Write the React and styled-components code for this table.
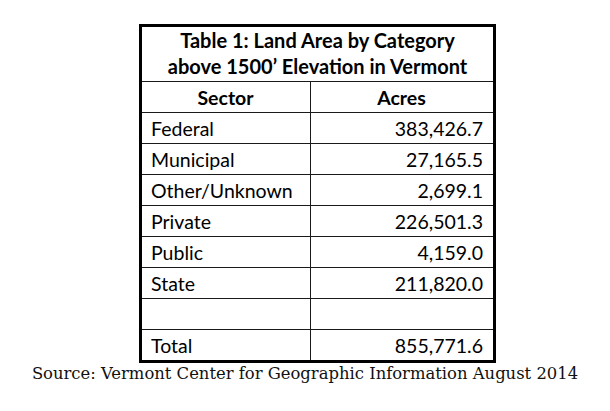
import React from 'react';
import styled, { createGlobalStyle } from 'styled-components';

const GlobalStyle = createGlobalStyle`
  html, body {
    margin: 0;
    padding: 0;
    background: #fff;
  }
`;

const Page = styled.div`
  width: 610px;
  height: 411px;
  display: flex;
  flex-direction: column;
  align-items: center;
  padding-top: 24px;
  box-sizing: border-box;
  font-family: Lato, "Open Sans", sans-serif;
  color: #000;
`;

const Table = styled.div`
  width: 357px;
  margin-left: 25px;
  border: 3px solid #000;
  box-sizing: border-box;
`;

const Title = styled.div`
  height: 54px;
  display: flex;
  flex-direction: column;
  justify-content: center;
  align-items: center;
  font-weight: 700;
  font-size: 20px;
  line-height: 26px;
  padding-bottom: 2px;
  box-sizing: border-box;
`;

const Row = styled.div`
  display: grid;
  grid-template-columns: 168px 1fr;
  height: 31px;
  border-top: 1px solid #1a1a1a;
  box-sizing: border-box;
  font-size: 19.5px;
  font-weight: ${p => (p.$head ? 700 : 400)};
`;

const Cell = styled.div`
  display: flex;
  align-items: center;
  justify-content: ${p => (p.$head ? 'center' : p.$num ? 'flex-end' : 'flex-start')};
  padding: 0 10px 0 9px;
  border-left: ${p => (p.$num ? '1px solid #1a1a1a' : 'none')};
`;

const Caption = styled.div`
  margin-top: 0;
  font-family: "DejaVu Serif", "Liberation Serif", serif;
  font-size: 16.4px;
  line-height: 21px;
  color: #111;
`;

const rows = [
  ['Federal', '383,426.7'],
  ['Municipal', '27,165.5'],
  ['Other/Unknown', '2,699.1'],
  ['Private', '226,501.3'],
  ['Public', '4,159.0'],
  ['State', '211,820.0'],
  ['', ''],
  ['Total', '855,771.6'],
];

export default function App() {
  return (
    <Page>
      <GlobalStyle />
      <Table>
        <Title>
          <span>Table 1: Land Area by Category</span>
          <span>above 1500’ Elevation in Vermont</span>
        </Title>
        <Row $head>
          <Cell $head>Sector</Cell>
          <Cell $head $num>Acres</Cell>
        </Row>
        {rows.map(([sector, acres], i) => (
          <Row key={i}>
            <Cell>{sector}</Cell>
            <Cell $num>{acres}</Cell>
          </Row>
        ))}
      </Table>
      <Caption>Source: Vermont Center for Geographic Information August 2014</Caption>
    </Page>
  );
}
